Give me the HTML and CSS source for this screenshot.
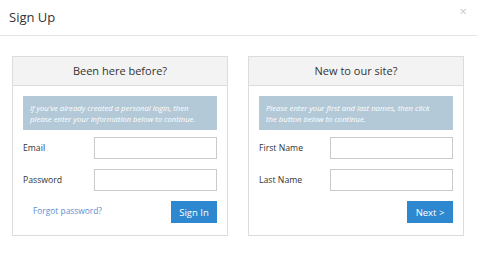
FILE: index.html
```html
<!DOCTYPE html>
<html>
<head>
<meta charset="utf-8">
<link rel="stylesheet" href="styles.css">
</head>
<body>
<div class="modal">
  <div class="modal-header">
    <span class="modal-title">Sign Up</span>
    <span class="close">&times;</span>
  </div>
  <div class="modal-body">
    <div class="panel">
      <div class="panel-heading">Been here before?</div>
      <div class="panel-body">
        <div class="info">If you've already created a personal login, then please enter your information below to continue.</div>
        <div class="row"><label>Email</label><input class="field" type="text"></div>
        <div class="row"><label>Password</label><input class="field" type="password"></div>
        <div class="actions">
          <a class="link">Forgot password?</a>
          <button class="btn">Sign In</button>
        </div>
      </div>
    </div>
    <div class="panel">
      <div class="panel-heading">New to our site?</div>
      <div class="panel-body">
        <div class="info">Please enter your first and last names, then click the button below to continue.</div>
        <div class="row"><label>First Name</label><input class="field" type="text"></div>
        <div class="row"><label>Last Name</label><input class="field" type="text"></div>
        <div class="actions end">
          <button class="btn">Next &gt;</button>
        </div>
      </div>
    </div>
  </div>
</div>
</body>
</html>
```
FILE: styles.css
```css
html, body {
  margin: 0;
  padding: 0;
  background: #fff;
  font-family: "Open Sans", "Liberation Sans", sans-serif;
  color: #333;
}
.modal {
  width: 477px;
}
.modal-header {
  height: 35px;
  border-bottom: 1px solid #e5e5e5;
  display: flex;
  align-items: flex-start;
  justify-content: space-between;
  padding: 0 10px 0 9px;
  box-sizing: content-box;
}
.modal-title {
  font-size: 13px;
  line-height: 18px;
  margin-top: 8px;
}
.close {
  font-size: 13px;
  line-height: 13px;
  color: #c8c8c8;
  margin-top: 5px;
}
.modal-body {
  display: flex;
  gap: 20px;
  padding: 20px 12px 0 12px;
}
.panel {
  width: 216px;
  box-sizing: border-box;
  border: 1px solid #dcdcdc;
}
.panel-heading {
  height: 28px;
  background: #f3f3f3;
  border-bottom: 1px solid #dcdcdc;
  text-align: center;
  font-size: 11px;
  line-height: 28px;
  color: #333;
}
.panel-body {
  padding: 10px 10px 12px 10px;
}
.info {
  background: #b4c9d7;
  color: #fff;
  font-style: italic;
  font-size: 7.7px;
  line-height: 11px;
  height: 34px;
  box-sizing: border-box;
  padding: 7px 14px 0 7px;
}
.info + .row { margin-top: 7px; }
.row {
  display: flex;
  align-items: center;
  margin-top: 10px;
}
.row label {
  width: 71px;
  font-size: 8.7px;
  color: #333;
}
.field {
  width: 123px;
  height: 22px;
  box-sizing: border-box;
  border: 1px solid #cacaca;
  margin: 0;
  padding: 0;
  background: #fff;
}
.actions {
  display: flex;
  align-items: center;
  justify-content: space-between;
  margin-top: 10px;
  padding-left: 10px;
}
.actions.end { justify-content: flex-end; }
.link {
  font-size: 8.4px;
  color: #5b8fcf;
  margin-top: -4px;
}
.btn {
  width: 46px;
  height: 22px;
  border: 0;
  margin: 0;
  padding: 0;
  background: #2e88d0;
  color: #fff;
  font-family: "Open Sans", "Liberation Sans", sans-serif;
  font-size: 9.5px;
}
```
